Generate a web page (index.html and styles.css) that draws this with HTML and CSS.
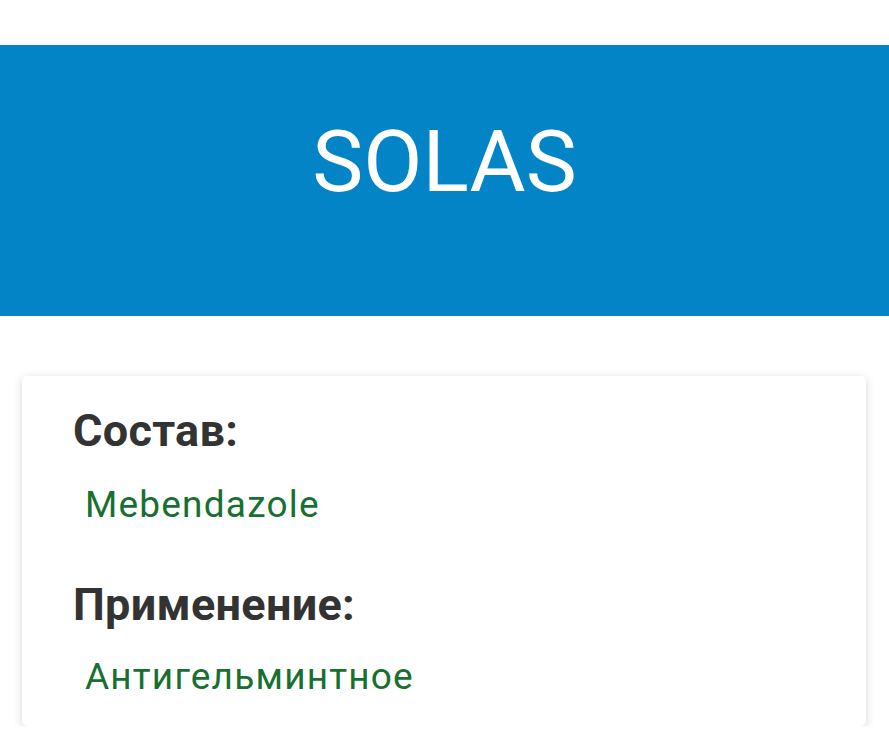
FILE: index.html
```html
<!DOCTYPE html>
<html lang="ru">
<head>
<meta charset="utf-8">
<title>SOLAS</title>
<link rel="stylesheet" href="styles.css">
</head>
<body>
<header class="banner">
  <h1 class="banner-title">SOLAS</h1>
</header>
<main class="card">
  <h2 class="label">Состав:</h2>
  <p class="value">Mebendazole</p>
  <h2 class="label label-next">Применение:</h2>
  <p class="value">Антигельминтное</p>
</main>
</body>
</html>
```
FILE: styles.css
```css
html, body {
  margin: 0;
  padding: 0;
  background: #ffffff;
}
body {
  font-family: Roboto, "Noto Sans", "Liberation Sans", sans-serif;
  padding-top: 45px;
}
.banner {
  background: #0284c6;
  padding: 74px 0 111px;
  display: flex;
  justify-content: center;
}
.banner-title {
  margin: 0;
  font-size: 86px;
  line-height: 1;
  font-weight: 400;
  color: #ffffff;
}
.card {
  margin: 60px 23px 0 22px;
  background: #ffffff;
  border-radius: 5px;
  box-shadow: 0 2px 10px rgba(0, 0, 0, 0.16);
  padding: 32px 40px 31px 51px;
  display: flex;
  flex-direction: column;
}
.label {
  margin: 0;
  font-size: 45px;
  line-height: 1;
  font-weight: 700;
  letter-spacing: 0.3px;
  color: #333333;
}
.label-next {
  margin-top: 59px;
}
.value {
  margin: 33px 0 0 12px;
  font-size: 37px;
  line-height: 1;
  letter-spacing: 1.2px;
  color: #17702f;
}
.label-next + .value {
  margin-top: 31px;
}
```
